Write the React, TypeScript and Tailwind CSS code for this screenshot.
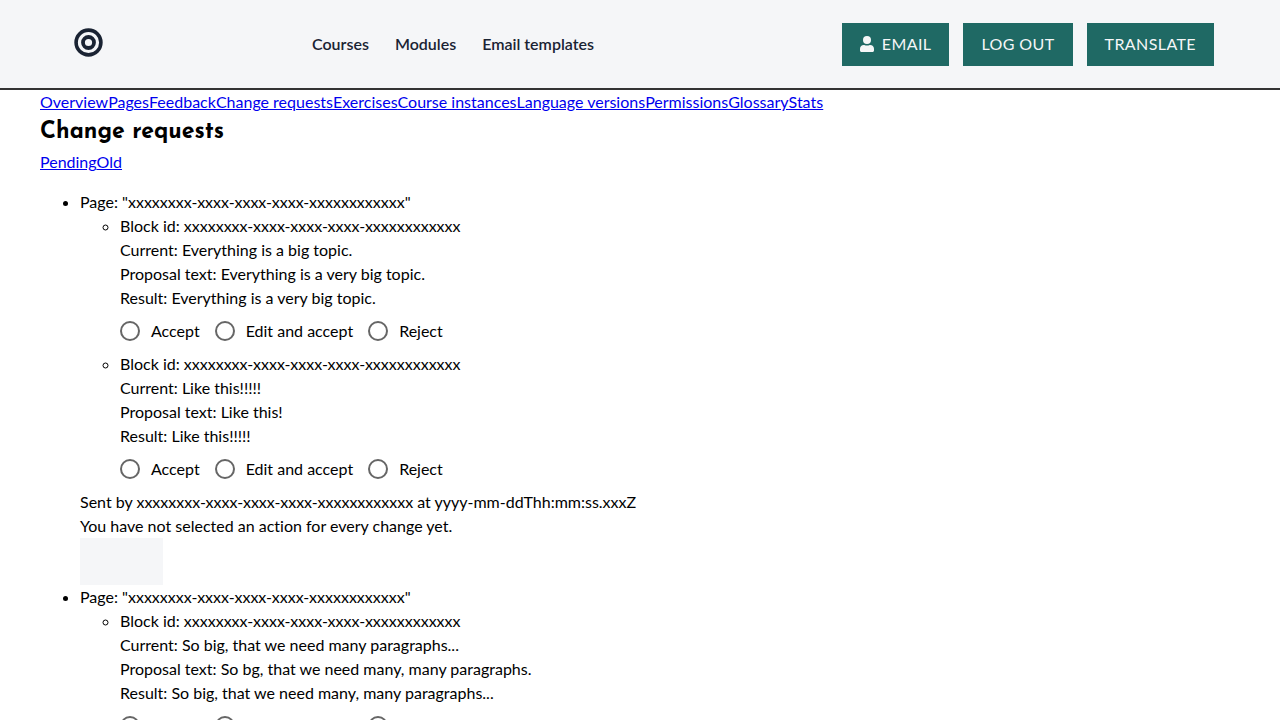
const ID = "xxxxxxxx-xxxx-xxxx-xxxx-xxxxxxxxxxxx"

interface BlockEdit {
  current: string
  proposal: string
  result: string
}

const proposals: BlockEdit[][] = [
  [
    {
      current: "Everything is a big topic.",
      proposal: "Everything is a very big topic.",
      result: "Everything is a very big topic.",
    },
    { current: "Like this!!!!!", proposal: "Like this!", result: "Like this!!!!!" },
  ],
  [
    {
      current: "So big, that we need many paragraphs...",
      proposal: "So bg, that we need many, many paragraphs.",
      result: "So big, that we need many, many paragraphs...",
    },
  ],
]

const tabs = [
  "Overview",
  "Pages",
  "Feedback",
  "Change requests",
  "Exercises",
  "Course instances",
  "Language versions",
  "Permissions",
  "Glossary",
  "Stats",
]

const actions = ["Accept", "Edit and accept", "Reject"]

function Logo() {
  return (
    <svg width="29" height="29" viewBox="0 0 29 29" fill="none" stroke="#1a2333" aria-hidden="true">
      <circle cx="14.5" cy="14.5" r="12.4" strokeWidth="3.6" />
      <circle cx="14.5" cy="14.5" r="5.5" strokeWidth="3.8" />
    </svg>
  )
}

function UserIcon() {
  return (
    <svg width="14" height="16" viewBox="0 0 14 16" fill="currentColor" aria-hidden="true">
      <circle cx="7" cy="4" r="4" />
      <path d="M3.800 9h.5c.8.4 1.700.6 2.700.6s1.900-.2 2.700-.6h.5C12.300 9 14 10.700 14 12.800v1.700c0 .8-.7 1.500-1.500 1.500h-11C.7 16 0 15.300 0 14.500v-1.700C0 10.700 1.700 9 3.800 9z" />
    </svg>
  )
}

function Header() {
  const button =
    "flex h-[43px] items-center gap-2 bg-[#1f6964] px-[18px] text-[#f5f6f7] uppercase tracking-wide"
  return (
    <header className="flex min-h-[90px] items-center justify-between border-b-2 border-[#333] bg-[#f5f6f8] pr-[66px] pl-[74px]">
      <div className="flex items-center">
        <a href="#home" aria-label="Home" className="mr-[209px] pb-[3px]">
          <Logo />
        </a>
        <nav aria-label="Main" className="flex gap-[26px] font-semibold text-[#1a2333]">
          <a href="#courses">Courses</a>
          <a href="#modules">Modules</a>
          <a href="#templates">Email templates</a>
        </nav>
      </div>
      <div className="flex gap-[14px]">
        <button type="button" className={button}>
          <UserIcon />
          Email
        </button>
        <button type="button" className={button}>
          Log out
        </button>
        <button type="button" className={button}>
          Translate
        </button>
      </div>
    </header>
  )
}

function Block({ edit, name }: { edit: BlockEdit; name: string }) {
  return (
    <li>
      <p>Block id: {ID}</p>
      <p>Current: {edit.current}</p>
      <p>Proposal text: {edit.proposal}</p>
      <p>Result: {edit.result}</p>
      <div role="radiogroup" aria-label="Action" className="flex h-[42px] items-center gap-[15px]">
        {actions.map((action) => (
          <label key={action} className="flex items-center gap-[11px]">
            <input
              type="radio"
              name={name}
              className="size-5 appearance-none rounded-full border-2 border-[#666] checked:border-[6px] checked:border-[#1f6964]"
            />
            {action}
          </label>
        ))}
      </div>
    </li>
  )
}

export default function App() {
  return (
    <div className="min-h-screen bg-white font-['Lato',sans-serif] text-base text-black [font-variant-ligatures:none]">
      <Header />
      <main className="px-10">
        <nav aria-label="Course management" className="flex flex-wrap text-[#0000ee] underline">
          {tabs.map((tab) => (
            <a key={tab} href="#tab">
              {tab}
            </a>
          ))}
        </nav>
        <h1 className="pt-0.5 font-['Josefin_Sans','Lato',sans-serif] text-[23px] leading-[34px] font-bold">
          Change requests
        </h1>
        <nav aria-label="Request status" className="flex text-[#0000ee] underline">
          <a href="#pending">Pending</a>
          <a href="#old">Old</a>
        </nav>
        <ul className="mt-4 list-disc pl-10">
          {proposals.map((edits, i) => (
            <li key={i}>
              <p>Page: "{ID}"</p>
              <ul className="list-[circle] pl-10">
                {edits.map((edit, j) => (
                  <Block key={j} edit={edit} name={`action-${i}-${j}`} />
                ))}
              </ul>
              <p>Sent by {ID} at yyyy-mm-ddThh:mm:ss.xxxZ</p>
              <p>You have not selected an action for every change yet.</p>
              <button
                type="button"
                disabled
                aria-label="Send"
                className="block h-[47px] w-[83px] bg-[#f5f6f8]"
              />
            </li>
          ))}
        </ul>
      </main>
    </div>
  )
}
